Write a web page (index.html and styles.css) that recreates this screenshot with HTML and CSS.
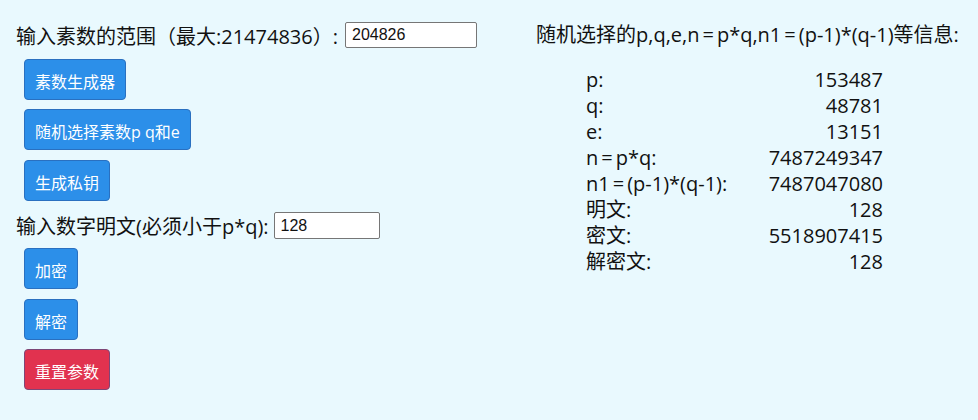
FILE: index.html
```html
<!DOCTYPE html>
<html lang="zh">
<head>
<meta charset="utf-8">
<title>RSA</title>
<link rel="stylesheet" href="styles.css">
</head>
<body>
<div class="page">
  <div class="left">
    <div class="row r1">
      <span class="label">输入素数的范围（最大:21474836）:</span>
      <input class="inp inp1" type="text" value="204826">
    </div>
    <button class="btn b1">素数生成器</button>
    <button class="btn b2">随机选择素数p q和e</button>
    <button class="btn b3">生成私钥</button>
    <div class="row r2">
      <span class="label">输入数字明文(必须小于p*q):</span>
      <input class="inp inp2" type="text" value="128">
    </div>
    <button class="btn b4">加密</button>
    <button class="btn b5">解密</button>
    <button class="btn btn-red b6">重置参数</button>
  </div>
  <div class="right">
    <div class="head">随机选择的p,q,e,n<span class="eq">=</span>p*q,n1<span class="eq">=</span>(p-1)*(q-1)等信息:</div>
    <table class="info">
      <tr><td class="k">p:</td><td class="v">153487</td></tr>
      <tr><td class="k">q:</td><td class="v">48781</td></tr>
      <tr><td class="k">e:</td><td class="v">13151</td></tr>
      <tr><td class="k">n<span class="eq">=</span>p*q:</td><td class="v">7487249347</td></tr>
      <tr><td class="k">n1<span class="eq">=</span>(p-1)*(q-1):</td><td class="v">7487047080</td></tr>
      <tr><td class="k">明文:</td><td class="v">128</td></tr>
      <tr><td class="k">密文:</td><td class="v">5518907415</td></tr>
      <tr><td class="k">解密文:</td><td class="v">128</td></tr>
    </table>
  </div>
</div>
</body>
</html>
```
FILE: styles.css
```css
html, body {
  margin: 0;
  padding: 0;
  background: #e9f9fe;
  height: 100%;
}
body {
  font-family: "Open Sans", "Noto Sans CJK SC", sans-serif;
  color: #111;
}
.page {
  display: grid;
  grid-template-columns: 520px 1fr;
  padding: 22px 0 0 16px;
}
.left {
  display: flex;
  flex-direction: column;
  align-items: flex-start;
}
.row {
  display: flex;
  align-items: center;
  font-size: 20px;
  height: 26px;
}
.label {
  white-space: nowrap;
  margin-right: 5px;
}
.r1 .label { margin-right: 7px; }
.inp {
  box-sizing: border-box;
  height: 26px;
  border: 1px solid #767676;
  border-radius: 2px;
  background: #fff;
  font-family: "Liberation Sans", "Noto Sans CJK SC", sans-serif;
  font-size: 16px;
  padding: 0 6px;
  color: #111;
}
.inp1 { width: 132px; }
.inp2 { width: 106px; height: 27px; }
.r2 { height: 27px; margin-top: 11px; }
.btn {
  box-sizing: border-box;
  height: 41px;
  margin-left: 8px;
  padding: 2px 10px 0;
  border: 1px solid #2a70c0;
  border-radius: 4px;
  background: #2c8fe9;
  color: #fff;
  font-family: "Open Sans", "Noto Sans CJK SC", sans-serif;
  font-size: 16px;
  white-space: nowrap;
}
.btn-red {
  background: #e1324f;
  border-color: #7d4677;
}
.b1 { margin-top: 11px; }
.b2 { margin-top: 9px; }
.b3 { margin-top: 10px; }
.b4 { margin-top: 9px; }
.b5 { margin-top: 10px; }
.b6 { margin-top: 9px; }
.right {
  font-size: 20px;
}
.head {
  height: 26px;
  line-height: 26px;
  white-space: nowrap;
}
.eq {
  margin: 0 3px;
}
.info {
  margin: 19px 0 0 50px;
  border-collapse: collapse;
  width: 297px;
}
.info td {
  padding: 0;
  height: 26px;
  line-height: 26px;
  white-space: nowrap;
}
.info .v { text-align: right; }
```
